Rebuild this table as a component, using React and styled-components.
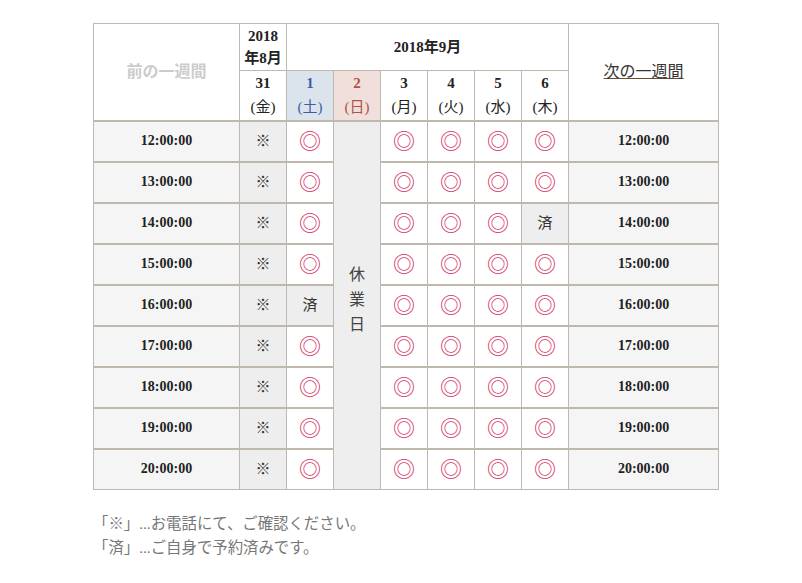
import styled, { createGlobalStyle } from "styled-components";

const GlobalStyle = createGlobalStyle`
  body {
    margin: 0;
    background: #ffffff;
    font-family: "Liberation Serif", "Noto Sans CJK JP", serif;
    color: #333333;
  }
`;

const days = [
  { num: "3", wd: "月" },
  { num: "4", wd: "火" },
  { num: "5", wd: "水" },
  { num: "6", wd: "木" },
];

const times = ["12:00:00", "13:00:00", "14:00:00", "15:00:00", "16:00:00", "17:00:00", "18:00:00", "19:00:00", "20:00:00"];

// which slots are already booked: [rowIndex, column]
const booked = { "4-sat": true, "2-thu": true };

const App = () => {
  return (
    <>
      <GlobalStyle />
      <Page>
        <Calendar>
          <colgroup>
            <col style={{ width: 146 }} />
            {Array.from({ length: 7 }).map((_, i) => (
              <col key={i} style={{ width: 47 }} />
            ))}
            <col style={{ width: 150 }} />
          </colgroup>
          <thead>
            <tr>
              <NavCell rowSpan={2}>
                <PrevLink>前の一週間</PrevLink>
              </NavCell>
              <MonthCell>
                2018
                <br />
                年8月
              </MonthCell>
              <MonthCell colSpan={6}>2018年9月</MonthCell>
              <NavCell rowSpan={2}>
                <NextLink href="#">次の一週間</NextLink>
              </NavCell>
            </tr>
            <tr>
              <DayCell>
                <DayNum>31</DayNum>
                <br />
                (金)
              </DayCell>
              <DayCell tone="sat">
                <DayNum>1</DayNum>
                <br />
                (土)
              </DayCell>
              <DayCell tone="sun">
                <DayNum>2</DayNum>
                <br />
                (日)
              </DayCell>
              {days.map((d) => (
                <DayCell key={d.num}>
                  <DayNum>{d.num}</DayNum>
                  <br />
                  ({d.wd})
                </DayCell>
              ))}
            </tr>
          </thead>
          <tbody>
            {times.map((t, i) => (
              <tr key={t}>
                <TimeCell>{t}</TimeCell>
                <SlotCell state="call">※</SlotCell>
                {booked[`${i}-sat`] ? <SlotCell state="done">済</SlotCell> : <SlotCell state="open">◎</SlotCell>}
                {i === 0 ? (
                  <ClosedCell rowSpan={9}>
                    休<br />業<br />日
                  </ClosedCell>
                ) : null}
                <SlotCell state="open">◎</SlotCell>
                <SlotCell state="open">◎</SlotCell>
                <SlotCell state="open">◎</SlotCell>
                {booked[`${i}-thu`] ? <SlotCell state="done">済</SlotCell> : <SlotCell state="open">◎</SlotCell>}
                <TimeCell>{t}</TimeCell>
              </tr>
            ))}
          </tbody>
        </Calendar>

        <Notes>
          <p>「※」...お電話にて、ご確認ください。</p>
          <p>「済」...ご自身で予約済みです。</p>
        </Notes>
      </Page>
    </>
  );
};

export default App;

const Page = styled.div`
  padding: 23px 0 0 93px;
`;

const Calendar = styled.table`
  width: 625px;
  table-layout: fixed;
  border-collapse: collapse;
  font-size: 14px;
  line-height: 1.6;

  th,
  td {
    border: 1px solid #bfb8ae;
    padding: 0;
    text-align: center;
  }

  tbody td {
    border-top: 2px solid #bfb8ae;
    height: 39px;
  }
`;

const NavCell = styled.th`
  background: #ffffff;
  font-weight: normal;
  font-size: 16px;
`;

const PrevLink = styled.span`
  color: #cccccc;
  font-weight: bold;
`;

const NextLink = styled.a`
  color: #333333;
  text-decoration: underline;
  text-decoration-color: #6b4a30;
`;

const MonthCell = styled.th`
  height: 46px;
  font-weight: bold;
  font-size: 15px;
  color: #222222;
  line-height: 1.5;
`;

const DayCell = styled.th`
  height: 49px;
  font-weight: normal;
  font-size: 15px;
  line-height: 1.55;
  color: ${({ tone }) => (tone === "sat" ? "#3b5fa3" : tone === "sun" ? "#b5504a" : "#222222")};
  background: ${({ tone }) => (tone === "sat" ? "#dbe4ec" : tone === "sun" ? "#f0dfdb" : "#ffffff")};
`;

const DayNum = styled.span`
  font-weight: bold;
`;

const TimeCell = styled.td`
  background: #f5f5f5;
  font-weight: bold;
  color: #222222;
`;

const SlotCell = styled.td`
  background: ${({ state }) => (state === "open" ? "#ffffff" : "#eeeeee")};
  color: ${({ state }) => (state === "open" ? "#d2335e" : "#333333")};
  font-size: ${({ state }) => (state === "open" ? "22px" : "15px")};
  line-height: 1;
`;

const ClosedCell = styled.td`
  background: #eeeeee;
  color: #444444;
  font-size: 16px;
  line-height: 25px;
  padding-bottom: 12px !important;
`;

const Notes = styled.div`
  margin-top: 22px;
  color: #777777;
  font-size: 15.4px;
  line-height: 24px;

  p {
    margin: 0;
  }
`;
